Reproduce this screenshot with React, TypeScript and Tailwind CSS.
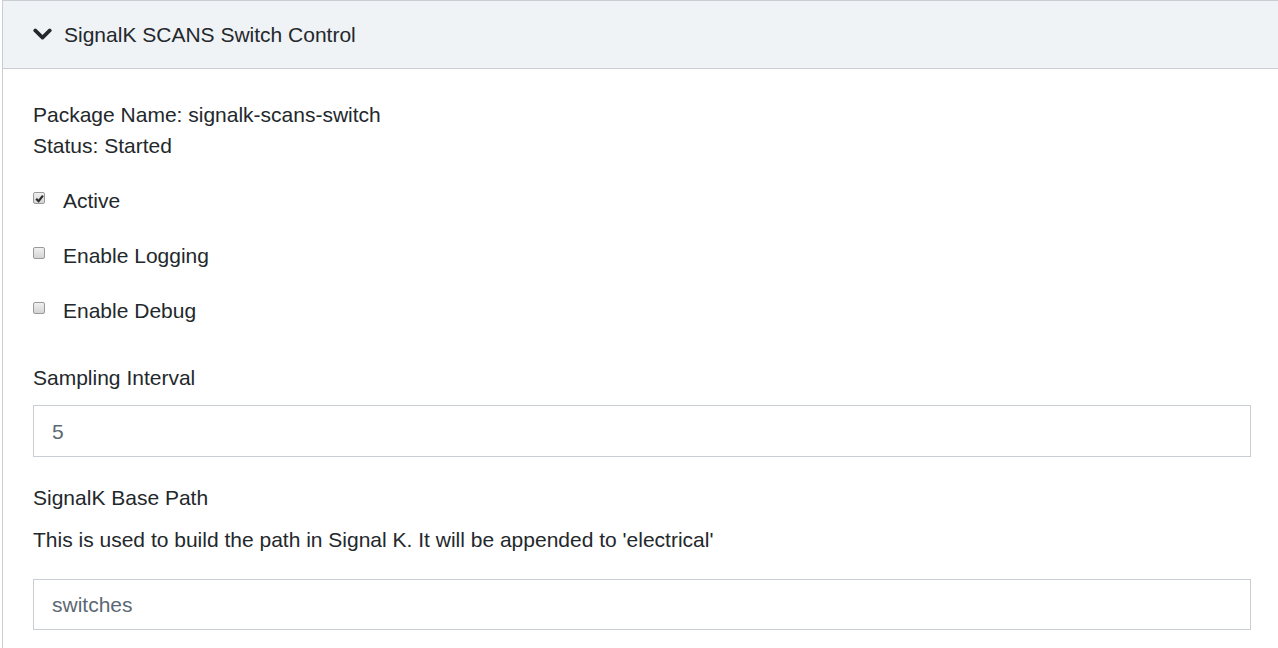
import React from "react";

function Check({ checked }: { checked?: boolean }) {
  return (
    <span className="inline-flex h-[12px] w-[12px] items-center justify-center rounded-[2px] border border-[#9a9a9a] bg-gradient-to-b from-[#f0f0f0] to-[#d4d4d4]">
      {checked && (
        <svg width="9" height="9" viewBox="0 0 10 10">
          <path d="M1.3 5.2 L4 8 L8.8 1.8" fill="none" stroke="#2b2b2b" strokeWidth="2.4" />
        </svg>
      )}
    </span>
  );
}

function CheckRow({ label, checked, className }: { label: string; checked?: boolean; className?: string }) {
  return (
    <div className={"flex h-[30px] items-center " + (className || "")}>
      <div className="flex w-[30px] items-center -translate-y-[2px]">
        <Check checked={checked} />
      </div>
      <span>{label}</span>
    </div>
  );
}

export default function App() {
  return (
    <div
      className="min-h-[648px] bg-white text-[#23282c] text-[21px] leading-[31px]"
      style={{ fontFamily: '"Liberation Sans", Arial, sans-serif' }}
    >
      <div className="ml-[2px] border-l border-t border-[#c8ced3]">
        <div className="flex h-[68px] items-center border-b border-[#c8ced3] bg-[#f0f3f5] pl-[30px]">
          <svg width="19" height="13" viewBox="0 0 19 13" className="mr-[12px]">
            <path d="M2.2 2.4 L9.5 9.6 L16.8 2.4" fill="none" stroke="#23282c" strokeWidth="3.6" strokeLinecap="round" strokeLinejoin="round" />
          </svg>
          <span>SignalK SCANS Switch Control</span>
        </div>
        <div className="pl-[30px] pr-[27px] pt-[30px] pb-[30px]">
          <div>Package Name: signalk-scans-switch</div>
          <div>Status: Started</div>
          <CheckRow label="Active" checked className="mt-[24px]" />
          <CheckRow label="Enable Logging" className="mt-[25px]" />
          <CheckRow label="Enable Debug" className="mt-[25px]" />
          <div className="mt-[37px]">Sampling Interval</div>
          <div className="mt-[12px] flex h-[52px] items-center border border-[#c8ced3] pl-[18px] text-[#5c6873]">5</div>
          <div className="mt-[25px]">SignalK Base Path</div>
          <div className="mt-[11px]">This is used to build the path in Signal K. It will be appended to 'electrical'</div>
          <div className="mt-[24px] flex h-[51px] items-center border border-[#c8ced3] pl-[18px] text-[#5c6873]">switches</div>
        </div>
      </div>
    </div>
  );
}
